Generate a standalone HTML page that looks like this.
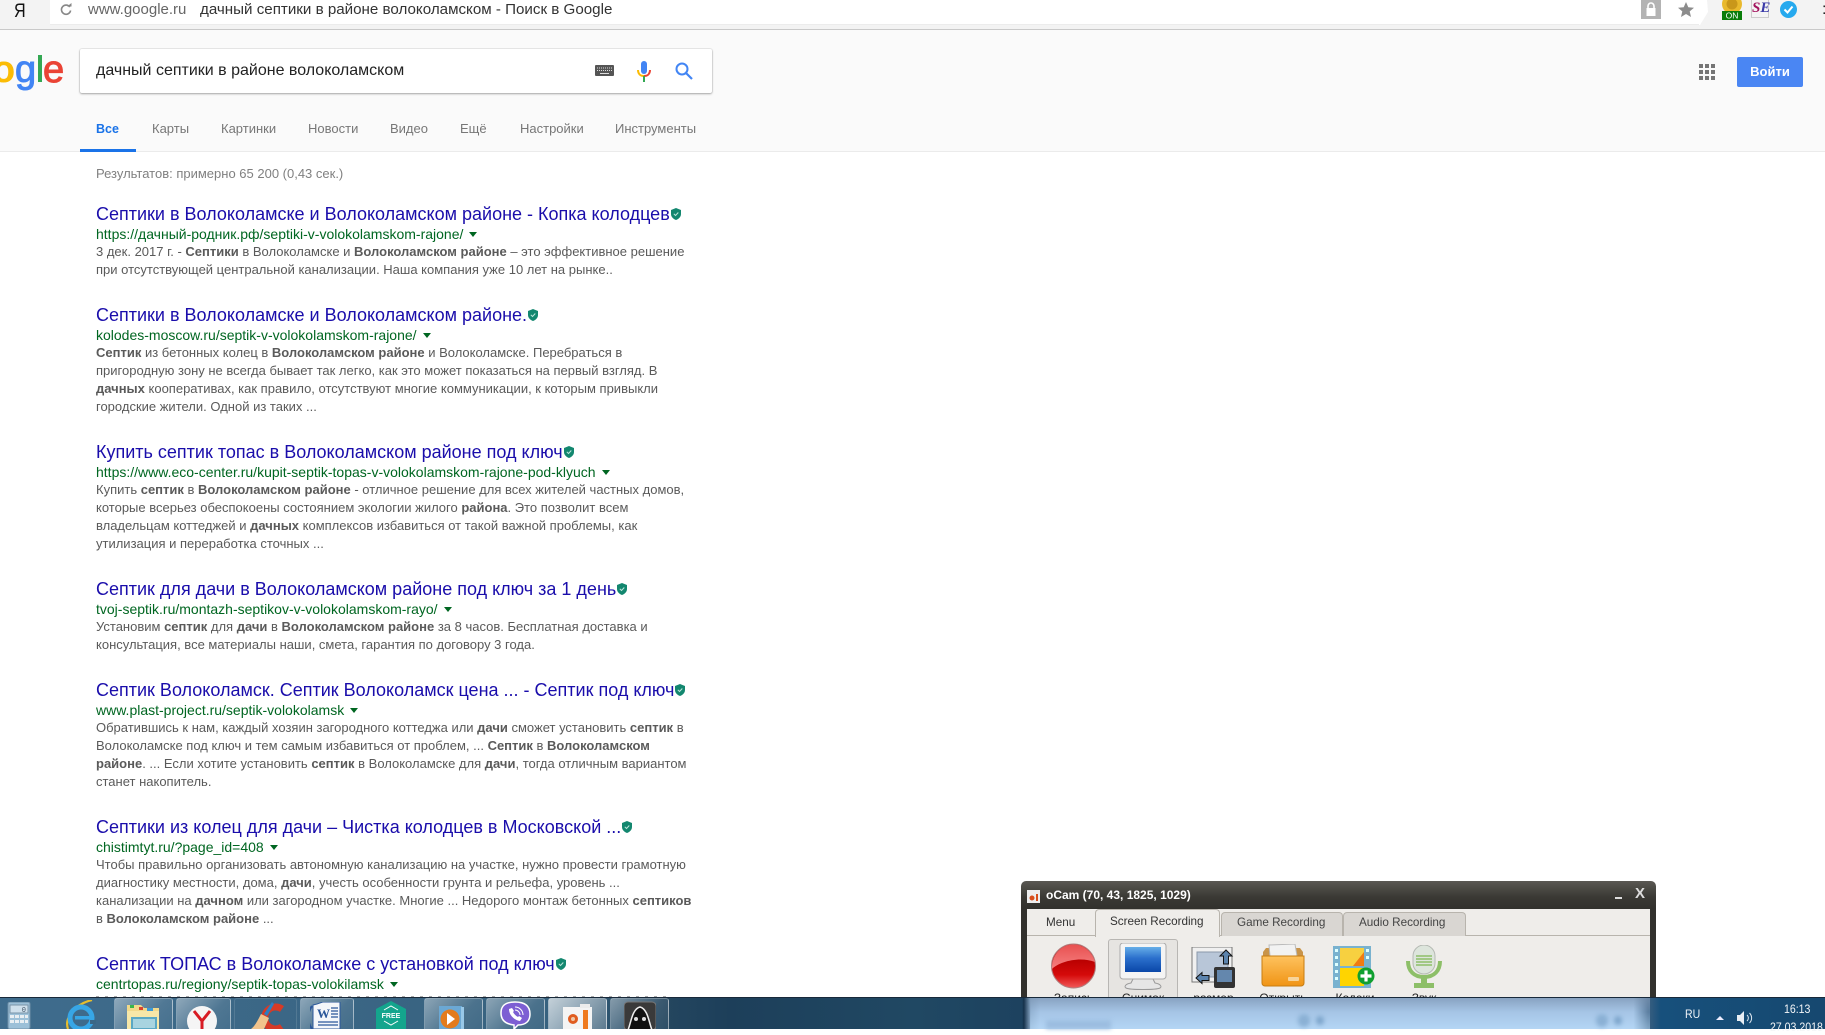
<!DOCTYPE html>
<html lang="ru"><head><meta charset="utf-8"><title>дачный септики в районе волоколамском - Поиск в Google</title>
<style>
html,body{margin:0;padding:0;width:1825px;height:1029px;overflow:hidden;background:#fff;font-family:"Liberation Sans",Arial,sans-serif}
div,span,svg{position:absolute}
b span,span span,a span{position:static}
.t{white-space:nowrap;left:96px;font-size:18px;line-height:22px;color:#1a0dab}
.u{white-space:nowrap;left:96px;font-size:14px;line-height:18px;color:#006621}
.s{white-space:nowrap;left:96px;font-size:13px;line-height:18px;color:#5a5a5a}
.n{white-space:nowrap;top:120px;font-size:13px;line-height:18px;color:#777}
.c{width:0;height:0;border-left:4px solid transparent;border-right:4px solid transparent;border-top:5px solid #006621}
.tb{top:998px;height:31px;border:1px solid rgba(255,255,255,.32);border-bottom:0;border-radius:3px 3px 0 0;background:linear-gradient(135deg,rgba(255,255,255,.42),rgba(255,255,255,.1) 60%,rgba(255,255,255,.05))}
.lab{top:990px;font-size:12px;line-height:16px;color:#222;white-space:nowrap;text-align:center}
.tab{white-space:nowrap;font-size:11.700px;line-height:16px;color:#333}
</style></head><body>

<!-- browser chrome -->
<div style="left:0;top:0;width:1825px;height:29px;background:#f3f3f3"></div>
<div style="left:0;top:29px;width:1825px;height:1px;background:#c9c9c9"></div>
<div style="left:50px;top:0;width:1650px;height:24px;background:#fff;border-bottom:1px solid #ececec"></div>
<svg style="left:1699px;top:0" width="10" height="25"><path d="M0 0L8 0L9 12L1 25L0 25Z" fill="#fff"/></svg>
<span style="left:14px;top:2px;font-size:19px;line-height:20px;color:#111;transform:scaleX(.85);transform-origin:0 0">Я</span>
<svg style="left:60px;top:3px" width="12" height="13" viewBox="0 0 12 13"><path d="M9.800 4A4.600 4.600 0 1 0 10.600 7.500" fill="none" stroke="#888" stroke-width="1.600"/><path d="M7 3.500h4.500v-3.500z" fill="#888"/></svg>
<span style="left:88px;top:1px;font-size:15px;line-height:18px;color:#666;white-space:nowrap">www.google.ru</span>
<span style="left:200px;top:1px;font-size:15.150px;line-height:18px;color:#333;white-space:nowrap">дачный септики в районе волоколамском - Поиск в Google</span>
<div style="left:1641px;top:0;width:20px;height:19px;background:#b3b3b3"></div>
<svg style="left:1645px;top:2px" width="12" height="14"><path d="M3 6V4a3 3 0 0 1 6 0v2" fill="none" stroke="#fff" stroke-width="1.600"/><rect x="1.500" y="6" width="9" height="8" fill="#fff"/></svg>
<svg style="left:1678px;top:2px" width="16" height="15" viewBox="0 0 16 15"><path d="M8 0l2.300 5.200 5.700.5-4.300 3.700 1.300 5.600L8 12l-5 3 1.300-5.600L0 5.700l5.700-.5z" fill="#8c8c8c"/></svg>
<svg style="left:1722px;top:0" width="20" height="20"><circle cx="10" cy="4" r="10" fill="#e9b92d"/><circle cx="10" cy="4" r="5.500" fill="#c9971a"/><rect y="11" width="20" height="9" fill="#0a7d0a"/><text x="10" y="18.500" font-size="8.500" font-family="Liberation Sans" fill="#fff" text-anchor="middle">ON</text></svg>
<div style="left:1751px;top:0;width:18px;height:18px;background:#f4f4f4;border:1px solid #ccc;border-top:0;box-sizing:border-box"></div>
<span style="left:1752px;top:-1px;font:italic bold 15px/18px 'Liberation Serif',serif;color:#a3145e">S<span style="color:#3a3aa8">E</span></span>
<svg style="left:1780px;top:1px" width="17" height="17"><circle cx="8.500" cy="8.500" r="8.500" fill="#26a9ee"/><path d="M4.500 8.500l3 3 5-6" fill="none" stroke="#fff" stroke-width="2"/></svg>
<span style="left:1822px;top:0;font-size:16px;line-height:20px;color:#222">:</span>

<!-- google header -->
<div style="left:0;top:30px;width:1825px;height:121px;background:#fafafa"></div>
<div style="left:0;top:151px;width:1825px;height:1px;background:#ebebeb"></div>
<span style="left:-8px;top:48px;font-size:38px;line-height:44px;color:#fbbc05;font-weight:700">o</span>
<span style="left:15px;top:48px;font-size:38px;line-height:44px;color:#4285f4;-webkit-text-stroke:1px #4285f4">g</span>
<div style="left:38px;top:55px;width:4px;height:27px;background:#34a853"></div>
<span style="left:43px;top:48px;font-size:38px;line-height:44px;color:#ea4335;-webkit-text-stroke:1px #ea4335">e</span>

<div style="left:80px;top:49px;width:632px;height:44px;background:#fff;border-radius:2px;box-shadow:0 1px 2px rgba(0,0,0,.3),0 0 0 1px rgba(0,0,0,.06)"></div>
<span style="left:96px;top:62px;font-size:16px;line-height:18px;color:#222;white-space:nowrap">дачный септики в районе волоколамском</span>
<svg style="left:595px;top:65px" width="19" height="11"><rect width="19" height="11" rx="1" fill="#555"/><path d="M2 3h15M2 5.500h15" stroke="#ddd" stroke-width="1" stroke-dasharray="1 1"/><rect x="5" y="8" width="9" height="1" fill="#ddd"/></svg>
<svg style="left:637px;top:61px" width="14" height="21" viewBox="0 0 14 21"><rect x="4" y="0" width="6" height="13" rx="3" fill="#4285f4"/><path d="M1 9c0 4 2.500 6 6 6" fill="none" stroke="#fbbc05" stroke-width="2"/><path d="M13 9c0 4-2.500 6-6 6" fill="none" stroke="#ea4335" stroke-width="2"/><rect x="6" y="15" width="2" height="6" fill="#34a853"/></svg>
<svg style="left:675px;top:62px" width="18" height="18" viewBox="0 0 18 18"><circle cx="7" cy="7" r="5.500" fill="none" stroke="#4285f4" stroke-width="2"/><path d="M11 11l6 6" stroke="#4285f4" stroke-width="2.200"/></svg>

<svg style="left:1699px;top:64px" width="16" height="16"><g fill="#757575"><rect width="4" height="4"/><rect x="6" width="4" height="4"/><rect x="12" width="4" height="4"/><rect y="6" width="4" height="4"/><rect x="6" y="6" width="4" height="4"/><rect x="12" y="6" width="4" height="4"/><rect y="12" width="4" height="4"/><rect x="6" y="12" width="4" height="4"/><rect x="12" y="12" width="4" height="4"/></g></svg>
<div style="left:1737px;top:57px;width:66px;height:30px;background:#4a86f3;border-radius:2px;color:#fff;font-weight:700;font-size:13px;line-height:29px;text-align:center">Войти</div>

<span class="n" style="left:96px;color:#1a73e8;font-weight:700;font-size:12.500px">Все</span>
<span class="n" style="left:152px">Карты</span>
<span class="n" style="left:221px">Картинки</span>
<span class="n" style="left:308px">Новости</span>
<span class="n" style="left:390px">Видео</span>
<span class="n" style="left:460px">Ещё</span>
<span class="n" style="left:520px">Настройки</span>
<span class="n" style="left:615px">Инструменты</span>
<div style="left:80px;top:149px;width:56px;height:3px;background:#1a73e8"></div>

<span class="s" style="top:165px;color:#808080">Результатов: примерно 65 200 (0,43 сек.)</span>

<!-- results -->
<span class="t" style="top:203px">Септики в Волоколамске и Волоколамском районе - Копка колодцев</span>
<svg style="left:671px;top:208px" width="10" height="12" viewBox="0 0 10 12"><path d="M5 0l5 2v4c0 3-2.500 5-5 6-2.500-1-5-3-5-6V2z" fill="#13876f"/><path d="M2.800 5.800l1.700 1.700 2.800-3" fill="none" stroke="#bfe6dc" stroke-width="1"/></svg>
<span class="u" style="top:225px">https://дачный-родник.рф/septiki-v-volokolamskom-rajone/</span><div class="c" style="left:469px;top:232px"></div>
<span class="s" style="top:243px">3 дек. 2017 г. - <b>Септики</b> в Волоколамске и <b>Волоколамском районе</b> – это эффективное решение</span>
<span class="s" style="top:261px">при отсутствующей центральной канализации. Наша компания уже 10 лет на рынке..</span>

<span class="t" style="top:304px">Септики в Волоколамске и Волоколамском районе.</span>
<svg style="left:528px;top:309px" width="10" height="12" viewBox="0 0 10 12"><path d="M5 0l5 2v4c0 3-2.500 5-5 6-2.500-1-5-3-5-6V2z" fill="#13876f"/><path d="M2.800 5.800l1.700 1.700 2.800-3" fill="none" stroke="#bfe6dc" stroke-width="1"/></svg>
<span class="u" style="top:326px">kolodes-moscow.ru/septik-v-volokolamskom-rajone/</span><div class="c" style="left:423px;top:333px"></div>
<span class="s" style="top:344px"><b>Септик</b> из бетонных колец в <b>Волоколамском районе</b> и Волоколамске. Перебраться в</span>
<span class="s" style="top:362px">пригородную зону не всегда бывает так легко, как это может показаться на первый взгляд. В</span>
<span class="s" style="top:380px"><b>дачных</b> кооперативах, как правило, отсутствуют многие коммуникации, к которым привыкли</span>
<span class="s" style="top:398px">городские жители. Одной из таких ...</span>

<span class="t" style="top:441px">Купить септик топас в Волоколамском районе под ключ</span>
<svg style="left:564px;top:446px" width="10" height="12" viewBox="0 0 10 12"><path d="M5 0l5 2v4c0 3-2.500 5-5 6-2.500-1-5-3-5-6V2z" fill="#13876f"/><path d="M2.800 5.800l1.700 1.700 2.800-3" fill="none" stroke="#bfe6dc" stroke-width="1"/></svg>
<span class="u" style="top:463px">https://www.eco-center.ru/kupit-septik-topas-v-volokolamskom-rajone-pod-klyuch</span><div class="c" style="left:602px;top:470px"></div>
<span class="s" style="top:481px">Купить <b>септик</b> в <b>Волоколамском районе</b> - отличное решение для всех жителей частных домов,</span>
<span class="s" style="top:499px">которые всерьез обеспокоены состоянием экологии жилого <b>района</b>. Это позволит всем</span>
<span class="s" style="top:517px">владельцам коттеджей и <b>дачных</b> комплексов избавиться от такой важной проблемы, как</span>
<span class="s" style="top:535px">утилизация и переработка сточных ...</span>

<span class="t" style="top:578px">Септик для дачи в Волоколамском районе под ключ за 1 день</span>
<svg style="left:617px;top:583px" width="10" height="12" viewBox="0 0 10 12"><path d="M5 0l5 2v4c0 3-2.500 5-5 6-2.500-1-5-3-5-6V2z" fill="#13876f"/><path d="M2.800 5.800l1.700 1.700 2.800-3" fill="none" stroke="#bfe6dc" stroke-width="1"/></svg>
<span class="u" style="top:600px">tvoj-septik.ru/montazh-septikov-v-volokolamskom-rayo/</span><div class="c" style="left:444px;top:607px"></div>
<span class="s" style="top:618px">Установим <b>септик</b> для <b>дачи</b> в <b>Волоколамском районе</b> за 8 часов. Бесплатная доставка и</span>
<span class="s" style="top:636px">консультация, все материалы наши, смета, гарантия по договору 3 года.</span>

<span class="t" style="top:679px">Септик Волоколамск. Септик Волоколамск цена ... - Септик под ключ</span>
<svg style="left:675px;top:684px" width="10" height="12" viewBox="0 0 10 12"><path d="M5 0l5 2v4c0 3-2.500 5-5 6-2.500-1-5-3-5-6V2z" fill="#13876f"/><path d="M2.800 5.800l1.700 1.700 2.800-3" fill="none" stroke="#bfe6dc" stroke-width="1"/></svg>
<span class="u" style="top:701px">www.plast-project.ru/septik-volokolamsk</span><div class="c" style="left:350px;top:708px"></div>
<span class="s" style="top:719px">Обратившись к нам, каждый хозяин загородного коттеджа или <b>дачи</b> сможет установить <b>септик</b> в</span>
<span class="s" style="top:737px">Волоколамске под ключ и тем самым избавиться от проблем, ... <b>Септик</b> в <b>Волоколамском</b></span>
<span class="s" style="top:755px"><b>районе</b>. ... Если хотите установить <b>септик</b> в Волоколамске для <b>дачи</b>, тогда отличным вариантом</span>
<span class="s" style="top:773px">станет накопитель.</span>

<span class="t" style="top:816px">Септики из колец для дачи – Чистка колодцев в Московской ...</span>
<svg style="left:622px;top:821px" width="10" height="12" viewBox="0 0 10 12"><path d="M5 0l5 2v4c0 3-2.500 5-5 6-2.500-1-5-3-5-6V2z" fill="#13876f"/><path d="M2.800 5.800l1.700 1.700 2.800-3" fill="none" stroke="#bfe6dc" stroke-width="1"/></svg>
<span class="u" style="top:838px">chistimtyt.ru/?page_id=408</span><div class="c" style="left:270px;top:845px"></div>
<span class="s" style="top:856px">Чтобы правильно организовать автономную канализацию на участке, нужно провести грамотную</span>
<span class="s" style="top:874px">диагностику местности, дома, <b>дачи</b>, учесть особенности грунта и рельефа, уровень ...</span>
<span class="s" style="top:892px">канализации на <b>дачном</b> или загородном участке. Многие ... Недорого монтаж бетонных <b>септиков</b></span>
<span class="s" style="top:910px">в <b>Волоколамском районе</b> ...</span>

<span class="t" style="top:953px">Септик ТОПАС в Волоколамске с установкой под ключ</span>
<svg style="left:556px;top:958px" width="10" height="12" viewBox="0 0 10 12"><path d="M5 0l5 2v4c0 3-2.500 5-5 6-2.500-1-5-3-5-6V2z" fill="#13876f"/><path d="M2.800 5.800l1.700 1.700 2.800-3" fill="none" stroke="#bfe6dc" stroke-width="1"/></svg>
<span class="u" style="top:975px">centrtopas.ru/regiony/septik-topas-volokilamsk</span><div class="c" style="left:390px;top:982px"></div>
<div style="left:96px;top:996px;width:570px;height:1px;background:repeating-linear-gradient(90deg,#aaa 0 3px,transparent 3px 9px)"></div>

<!-- oCam window -->
<div style="left:1021px;top:881px;width:635px;height:116px;background:linear-gradient(#5a5853,#3a3934 16px,#32312d 28px);border-radius:5px 5px 0 0"></div>
<div style="left:1027px;top:909px;width:623px;height:88px;background:#efedea"></div>
<svg style="left:1027px;top:890px" width="13" height="13"><rect width="13" height="13" fill="#eee"/><circle cx="5" cy="8" r="2.500" fill="#d8501e"/><rect x="9" y="4" width="2" height="7" fill="#d8501e"/></svg>
<span style="left:1046px;top:887px;font-weight:700;font-size:12px;line-height:16px;color:#fff;white-space:nowrap">oCam (70, 43, 1825, 1029)</span>
<div style="left:1615px;top:897px;width:7px;height:2px;background:#ddd"></div>
<span style="left:1635px;top:885px;font-size:15px;line-height:18px;color:#ddd;font-weight:700">X</span>

<div style="left:1027px;top:935px;width:623px;height:1px;background:#b8b4ad"></div>
<div style="left:1221px;top:912px;width:120px;height:23px;background:#d9d6d2;border:1px solid #b8b4ad;border-bottom:0;border-radius:4px 4px 0 0"></div>
<div style="left:1343px;top:912px;width:121px;height:23px;background:#d9d6d2;border:1px solid #b8b4ad;border-bottom:0;border-radius:4px 4px 0 0"></div>
<div style="left:1095px;top:909px;width:123px;height:27px;background:#efedea;border:1px solid #b8b4ad;border-bottom:0;border-radius:4px 4px 0 0"></div>
<span class="tab" style="left:1046px;top:915px">Menu</span>
<span class="tab" style="left:1110px;top:914px">Screen Recording</span>
<span class="tab" style="left:1237px;top:915px;color:#444">Game Recording</span>
<span class="tab" style="left:1359px;top:915px;color:#444">Audio Recording</span>

<div style="left:1108px;top:939px;width:68px;height:60px;background:#e6e4e1;border:1px solid #b8b6b3;border-radius:3px;box-sizing:content-box"></div>

<svg style="left:1051px;top:943px" width="45" height="46" viewBox="0 0 45 46"><defs><linearGradient id="r1" x1="0" y1="0" x2="0" y2="1"><stop offset=".35" stop-color="#b80000"/><stop offset=".7" stop-color="#d50a0a"/><stop offset="1" stop-color="#f25a5a"/></linearGradient><linearGradient id="r2" x1="0" y1="0" x2="0" y2="1"><stop offset="0" stop-color="#e85050"/><stop offset="1" stop-color="#f58080"/></linearGradient></defs><circle cx="22.500" cy="23" r="22" fill="url(#r1)" stroke="#b08080"/><path d="M1 26C8 19 28 13 44 19 41 8 32 1.500 22.500 1.500 10 1.500 .5 12 1 26z" fill="url(#r2)"/></svg>

<svg style="left:1119px;top:943px" width="48" height="48" viewBox="0 0 48 48"><path d="M14 36h20l2 4c6 1 7 4 5 5-4 2-30 2-34 0-2-1-1-4 5-5z" fill="#e6e6e6" stroke="#999"/><rect x="1" y="0" width="46" height="36" rx="3" fill="#f4f4f4" stroke="#aaa"/><defs><linearGradient id="m1" x1="0" y1="0" x2="0" y2="1"><stop offset="0" stop-color="#66aee8"/><stop offset=".45" stop-color="#2b6fcc"/><stop offset="1" stop-color="#0a47a8"/></linearGradient></defs><rect x="6" y="4" width="36" height="25" fill="url(#m1)"/></svg>

<svg style="left:1191px;top:947px" width="45" height="42" viewBox="0 0 45 42"><rect x="1" y="0" width="40" height="35" fill="#f0f0f0" stroke="#777"/><rect x="6" y="5" width="31" height="25" fill="#b8c6d8" stroke="#8a98aa"/><path d="M35 3l6 6h-3.500v8h-5V9H29z" fill="#5b83ad" stroke="#111"/><path d="M5 31l6-5.500v3h7v5h-7v3z" fill="#5b83ad" stroke="#111"/><rect x="23" y="20" width="21" height="21" rx="2" fill="#333"/><rect x="26" y="23" width="15" height="12" fill="#6487ad"/></svg>

<svg style="left:1261px;top:944px" width="44" height="43" viewBox="0 0 44 43"><path d="M2 8l3-4h34l3 4v6H2z" fill="#c8944a"/><path d="M8 1l26-1 2 12H9z" fill="#f2f2f2" stroke="#bbb"/><defs><linearGradient id="f1" x1="0" y1="0" x2="0" y2="1"><stop offset="0" stop-color="#fec25e"/><stop offset="1" stop-color="#f09415"/></linearGradient></defs><path d="M1 12h42v27a3 3 0 0 1-3 3H4a3 3 0 0 1-3-3z" fill="url(#f1)" stroke="#c77d12"/><rect x="27" y="33" width="11" height="4" rx="1" fill="#f7d49a"/></svg>

<svg style="left:1333px;top:946px" width="44" height="43" viewBox="0 0 44 43"><rect x="0" y="0" width="38" height="42" fill="#79b2cf"/><rect x="7" y="2" width="24" height="18" fill="#f7d040"/><path d="M31 6v14H20z" fill="#f07b12"/><rect x="7" y="22" width="24" height="18" fill="#ffd400"/><g fill="#dff"><rect x="2" y="3" width="3" height="3"/><rect x="2" y="10" width="3" height="3"/><rect x="2" y="17" width="3" height="3"/><rect x="2" y="24" width="3" height="3"/><rect x="2" y="31" width="3" height="3"/><rect x="33" y="3" width="3" height="3"/><rect x="33" y="10" width="3" height="3"/></g><circle cx="33" cy="30" r="8.500" fill="#10a030"/><path d="M33 24.500v11M27.500 30h11" stroke="#fff" stroke-width="3.200"/></svg>

<svg style="left:1405px;top:945px" width="38" height="44" viewBox="0 0 38 44"><path d="M3 16c0 10 6 16 16 16s16-6 16-16" fill="none" stroke="#8dbf68" stroke-width="4"/><rect x="8" y="0" width="22" height="29" rx="11" fill="#dde5dc" stroke="#b5b9b3"/><path d="M11 11h16M11 14h16M11 17h16M11 20h16" stroke="#8dbf68" stroke-width="1.500"/><rect x="16" y="31" width="6" height="8" fill="#8dbf68"/><rect x="9" y="38" width="20" height="5" fill="#8dbf68"/></svg>

<span class="lab" style="left:1051px;width:45px">Запись</span>
<span class="lab" style="left:1108px;width:70px">Снимок</span>
<span class="lab" style="left:1191px;width:45px">размер</span>
<span class="lab" style="left:1258px;width:50px">Открыть</span>
<span class="lab" style="left:1330px;width:50px">Кодеки</span>
<span class="lab" style="left:1405px;width:38px">Звук</span>

<!-- taskbar -->
<div style="left:0;top:997px;width:1825px;height:32px;background:linear-gradient(90deg,#3f6c8d 0,#37627f 30%,#24465f 36.500%,#1d3f5a 40%,#204863 50%,#1d425f 56%,#16324b 56.100%,#8eaecd 56.500%,#a8c8e8 57%,#a8c8e8 89.500%,#3a5f80 90.300%,#17507c 91%,#16486f 100%)"></div>
<div style="left:1030px;top:998px;width:620px;height:31px;background:linear-gradient(rgba(125,150,180,.75),rgba(160,190,225,.35) 45%,rgba(190,225,255,.55))"></div>
<div style="left:1046px;top:1020px;width:65px;height:9px;background:#9cbde0;filter:blur(2px)"></div>
<div style="left:1298px;top:1014px;width:12px;height:13px;border-radius:6px;background:#8ab0d4;filter:blur(2px)"></div>
<div style="left:1316px;top:1016px;width:8px;height:9px;border-radius:4px;background:#7ea6cc;filter:blur(2px)"></div>
<div style="left:1596px;top:1014px;width:12px;height:13px;border-radius:6px;background:#8ab0d4;filter:blur(2px)"></div>
<div style="left:1614px;top:1016px;width:8px;height:9px;border-radius:4px;background:#7ea6cc;filter:blur(2px)"></div>
<div style="left:0;top:997px;width:1825px;height:1px;background:#18293a"></div>

<div class="tb" style="left:114px;width:57px"></div>
<div class="tb" style="left:176px;width:53px"></div>
<div class="tb" style="left:234px;width:61px;background:none;border-color:rgba(255,255,255,.12)"></div>
<div class="tb" style="left:300px;width:52px"></div>
<div class="tb" style="left:424px;width:57px"></div>
<div class="tb" style="left:486px;width:57px"></div>
<div class="tb" style="left:548px;width:57px;background:linear-gradient(135deg,rgba(255,255,255,.7),rgba(255,255,255,.22))"></div>
<div class="tb" style="left:610px;width:57px"></div>

<svg style="left:7px;top:1002px" width="24" height="27"><rect x="1" y="0" width="22" height="27" rx="2" fill="#9cc0d8" stroke="#6e8ea6"/><rect x="3" y="3" width="18" height="8" fill="#cfe0ec" stroke="#7a93a8"/><text x="19" y="10" font-size="7" font-family="Liberation Mono" text-anchor="end" fill="#456">0</text><g fill="#e8eef2"><rect x="3" y="13" width="4" height="3"/><rect x="8" y="13" width="4" height="3"/><rect x="13" y="13" width="4" height="3"/><rect x="18" y="13" width="3" height="3"/><rect x="3" y="18" width="4" height="3"/><rect x="8" y="18" width="4" height="3"/><rect x="13" y="18" width="4" height="3"/><rect x="18" y="18" width="3" height="3"/></g></svg>

<svg style="left:65px;top:1000px" width="32" height="29" viewBox="0 0 32 29"><path d="M3 29C-1 18 10 4 27 0" fill="none" stroke="#e7bd2c" stroke-width="2.200"/><circle cx="16" cy="18" r="11" fill="none" stroke="#37a6e6" stroke-width="5"/><rect x="10" y="16" width="16" height="3.500" fill="#37a6e6"/><rect x="25" y="20" width="6" height="4" fill="#3b6786"/></svg>

<svg style="left:127px;top:1003px" width="32" height="26"><path d="M0 2h14l3 3h15v21H0z" fill="#f2d98a"/><rect x="3" y="2" width="4" height="3" fill="#3ab54a"/><rect x="12" y="4" width="4" height="3" fill="#d9432e"/><rect x="20" y="5" width="6" height="3" fill="#3a9ad9"/><path d="M0 8h32v18H0z" fill="#f7e7a8"/><rect x="5" y="15" width="24" height="11" fill="#a8d4e0" stroke="#5aa8c4" stroke-width="2"/></svg>

<svg style="left:187px;top:1006px" width="30" height="23"><circle cx="15" cy="15" r="15" fill="#f5f5f5"/><path d="M7 5l8 10 8-10M15 14v9" fill="none" stroke="#d81c24" stroke-width="3"/></svg>

<svg style="left:251px;top:1002px" width="34" height="27" viewBox="0 0 34 27"><path d="M31 7A11 11 0 1 0 31 25" fill="none" stroke="#d63a26" stroke-width="7"/><path d="M21 0l2 2-7 12-3-2z" fill="#2b7fc2"/><path d="M10 12l8 4-5 11H0c4-3 7-9 10-15z" fill="#f1c48c"/></svg>

<svg style="left:310px;top:1002px" width="31" height="27"><path d="M3 3c6-1 9-3 10-3h17v27H3z" fill="#f4f6fa" stroke="#2b579a"/><path d="M2 4a16 18 0 0 0 0 23" fill="none" stroke="#2b579a" stroke-width="2"/><text x="7" y="16" font-size="13" font-weight="700" font-family="Liberation Serif" fill="#2b579a">W</text><path d="M21 6h7M21 9h7M21 12h7M21 15h7M8 20h20M8 23h20" stroke="#2b579a" stroke-width="1.300"/></svg>

<svg style="left:376px;top:1001px" width="30" height="28"><path d="M15 0l15 8v20H0V8z" fill="#14a58d"/><text x="15" y="17" font-size="7" font-weight="700" font-family="Liberation Sans" fill="#fff" text-anchor="middle">FREE</text><path d="M8 9l7-4 7 4M8 20l7 4 7-4" fill="none" stroke="#fff"/></svg>

<svg style="left:439px;top:1006px" width="27" height="23"><rect x="0" y="0" width="23" height="23" fill="#6ba8d4"/><rect x="22" y="1" width="3" height="22" fill="#98c8e8"/><circle cx="11" cy="13" r="9.500" fill="#e37b1c"/><path d="M8 7l8 6-8 6z" fill="#fff"/></svg>

<svg style="left:500px;top:1001px" width="31" height="28"><path d="M15 1c10 0 15 4 15 12 0 7-4 11-12 11l-4 4v-4C5 23 1 19 1 12 1 4 6 1 15 1z" fill="#7d5fd3" stroke="#fff" stroke-width="1.500"/><path d="M9 8c0 6 5 11 11 12l2-3-3-2-1 1c-2-1-4-3-5-5l1-1-2-3z" fill="#fff"/><path d="M15 6a8 8 0 0 1 8 8M15 9a5 5 0 0 1 5 5" fill="none" stroke="#fff"/></svg>

<svg style="left:563px;top:1004px" width="30" height="25"><rect x="0" y="3" width="29" height="22" fill="#f4f4f4"/><rect x="17" y="0" width="10" height="4" fill="#ececec"/><circle cx="10" cy="15" r="5" fill="#e05c20"/><circle cx="10" cy="15" r="2" fill="#eec8a8"/><rect x="20" y="6" width="5" height="19" fill="#ef7a1e"/></svg>

<svg style="left:624px;top:1001px" width="32" height="28"><rect x="0" y="1" width="32" height="28" rx="4" fill="#3a3a3a" stroke="#777"/><path d="M4 29C7 22 8 8 16 6c8 2 9 16 12 23z" fill="#111" stroke="#eee" stroke-width="1.500"/><circle cx="12" cy="18" r="2" fill="#ddd"/><circle cx="20" cy="18" r="2" fill="#ddd"/></svg>

<span style="left:1685px;top:1006px;font-size:12px;line-height:16px;color:#f0f4f8;transform:scaleX(.88);transform-origin:0 0">RU</span>
<div style="left:1716px;top:1016px;width:0;height:0;border-left:4px solid transparent;border-right:4px solid transparent;border-bottom:4px solid #eef"></div>
<svg style="left:1736px;top:1011px" width="17" height="14"><path d="M1 4h3l4-4v14l-4-4H1z" fill="#e8eef4"/><path d="M11 4a4 4 0 0 1 0 6M13.500 2a7 7 0 0 1 0 10" fill="none" stroke="#dfe8f0"/></svg>
<span style="left:1784px;top:1001px;font-size:12px;line-height:16px;color:#f4f6f8;transform:scaleX(.88);transform-origin:0 0">16:13</span>
<span style="left:1770px;top:1019px;font-size:12px;line-height:16px;color:#f4f6f8;white-space:nowrap;transform:scaleX(.88);transform-origin:0 0">27.03.2018</span>
</body></html>
